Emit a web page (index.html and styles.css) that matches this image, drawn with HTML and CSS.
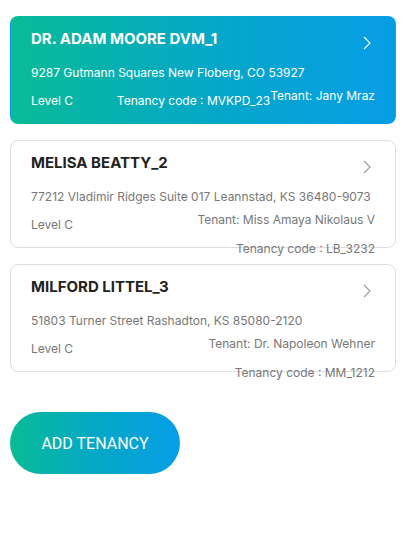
FILE: index.html
```html
<!DOCTYPE html>
<html>
<head>
<meta charset="utf-8">
<link rel="stylesheet" href="styles.css">
</head>
<body>
<main class="page">
  <section class="card card--active">
    <div class="card-head">
      <h2 class="card-title">DR. ADAM MOORE DVM_1</h2>
      <svg class="chev" width="8" height="14" viewBox="0 0 8 14"><path d="M1 1l6 6-6 6" fill="none" stroke="currentColor" stroke-width="1.1"/></svg>
    </div>
    <p class="card-addr">9287 Gutmann Squares New Floberg, CO 53927</p>
    <div class="card-foot">
      <span class="level">Level C</span>
      <div class="meta"><span class="tenant">Tenant: Jany Mraz</span><span class="code">Tenancy code : MVKPD_23</span></div>
    </div>
  </section>
  <section class="card">
    <div class="card-head">
      <h2 class="card-title">MELISA BEATTY_2</h2>
      <svg class="chev" width="8" height="14" viewBox="0 0 8 14"><path d="M1 1l6 6-6 6" fill="none" stroke="currentColor" stroke-width="1.1"/></svg>
    </div>
    <p class="card-addr">77212 Vladimir Ridges Suite 017 Leannstad, KS 36480-9073</p>
    <div class="card-foot">
      <span class="level">Level C</span>
      <div class="meta"><span class="tenant">Tenant: Miss Amaya Nikolaus V</span><span class="code">Tenancy code : LB_3232</span></div>
    </div>
  </section>
  <section class="card">
    <div class="card-head">
      <h2 class="card-title">MILFORD LITTEL_3</h2>
      <svg class="chev" width="8" height="14" viewBox="0 0 8 14"><path d="M1 1l6 6-6 6" fill="none" stroke="currentColor" stroke-width="1.1"/></svg>
    </div>
    <p class="card-addr">51803 Turner Street Rashadton, KS 85080-2120</p>
    <div class="card-foot">
      <span class="level">Level C</span>
      <div class="meta"><span class="tenant">Tenant: Dr. Napoleon Wehner</span><span class="code">Tenancy code : MM_1212</span></div>
    </div>
  </section>
  <button class="add-btn">ADD TENANCY</button>
</main>
</body>
</html>
```

FILE: styles.css
```css
* { box-sizing: border-box; }
html, body { margin: 0; padding: 0; background: #fff; }
body { font-family: Inter, "Noto Sans", sans-serif; }
.page {
  padding: 16px 20px 0 10px;
  display: flex;
  flex-direction: column;
  gap: 16px;
  align-items: stretch;
}
.card {
  height: 108px;
  border: 1px solid #dedde6;
  border-radius: 8px;
  padding: 12px 20px 0 20px;
  color: #777;
  background: #fff;
}
.card--active {
  border-color: transparent;
  background: linear-gradient(90deg, #0abb96 0%, #05a8c6 50%, #079de6 100%);
  color: #fff;
}
.card-head {
  display: flex;
  justify-content: space-between;
  align-items: flex-start;
}
.card-title {
  margin: 0;
  font-size: 15px;
  line-height: 20px;
  font-weight: 700;
  color: #222;
}
.card--active .card-title { color: #fff; }
.chev {
  margin-top: 7px;
  margin-right: 4px;
  color: #9a9a9a;
}
.card--active .chev { color: #fff; }
.card-addr {
  margin: 14px 0 0;
  font-size: 12px;
  line-height: 18px;
}
.card-foot {
  display: flex;
  justify-content: space-between;
  align-items: flex-start;
  margin-top: 2px;
  font-size: 12px;
  line-height: 34px;
}
.meta {
  width: 282px;
  text-align: right;
}
.tenant {
  float: right;
  line-height: 24px;
  white-space: nowrap;
}
.code { white-space: nowrap; }
.add-btn {
  align-self: flex-start;
  margin-top: 24px;
  width: 170px;
  height: 62px;
  border: none;
  border-radius: 31px;
  background: linear-gradient(90deg, #0abb96 0%, #05a8c6 50%, #079de6 100%);
  color: #fff;
  font-family: Roboto, "Noto Sans", sans-serif;
  font-size: 16px;
  padding: 0;
}
```
